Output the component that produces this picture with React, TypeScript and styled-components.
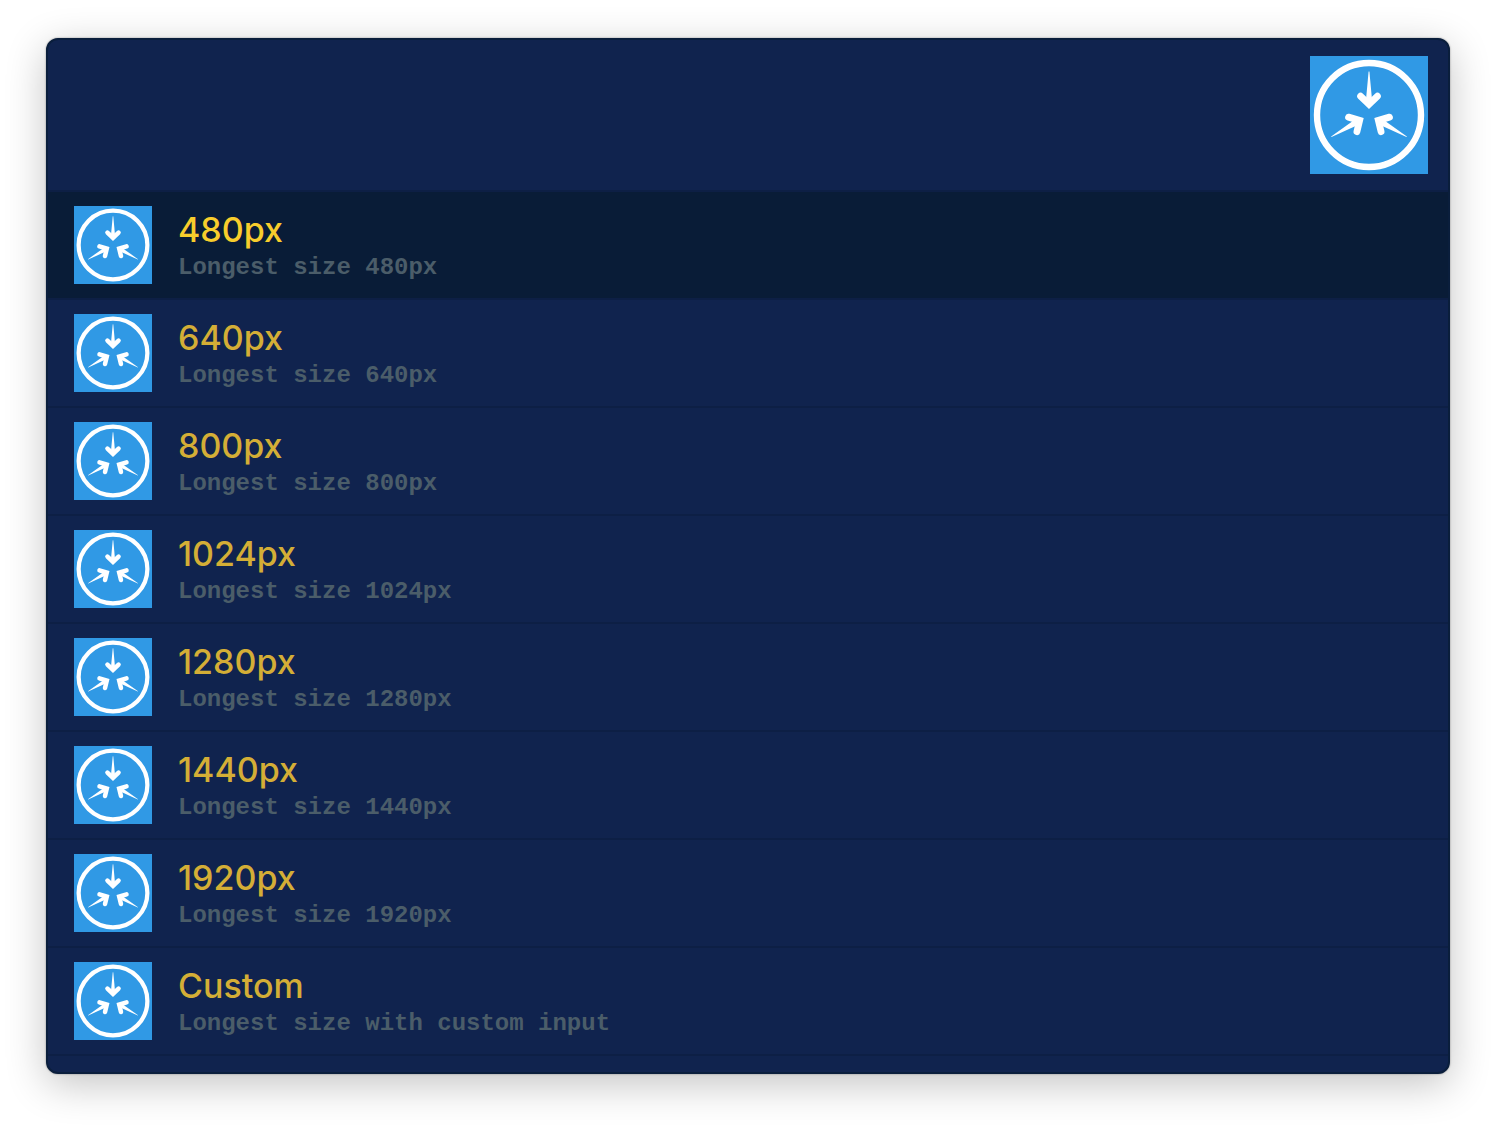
import React, { useState } from "react";
import styled, { createGlobalStyle } from "styled-components";

const GlobalStyle = createGlobalStyle`
  *, *::before, *::after { box-sizing: border-box; }
  body { margin: 0; background: #ffffff; }
`;

const Page = styled.main`
  min-height: 100vh;
  padding: 38px 46px 54px;
  font-family: Inter, "Liberation Sans", sans-serif;
`;

const Panel = styled.section`
  padding-bottom: 16px;
  overflow: hidden;
  border: 2px solid #0a1e3c;
  border-radius: 12px;
  background: #10234e;
  box-shadow: 0 0 2px rgba(0, 0, 0, 0.4), 0 10px 40px rgba(0, 0, 0, 0.24);
`;

const SearchBar = styled.header`
  display: flex;
  align-items: center;
  gap: 24px;
  padding: 16px 20px 16px 24px;
  border-bottom: 2px solid #0d1f45;
`;

const SearchInput = styled.input`
  flex: 1;
  min-width: 0;
  height: 80px;
  border: 0;
  outline: 0;
  background: transparent;
  color: #d4ae36;
  font: 500 48px Inter, "Liberation Sans", sans-serif;
`;

const Results = styled.ul`
  margin: 0;
  padding: 0;
  list-style: none;
`;

const Row = styled.button<{ $active: boolean }>`
  display: flex;
  align-items: center;
  gap: 26px;
  width: 100%;
  padding: 14px 26px;
  border: 0;
  border-bottom: 2px solid #0d1f45;
  outline: 0;
  background: ${(p) => (p.$active ? "#091c37" : "transparent")};
  color: ${(p) => (p.$active ? "#f8cd2c" : "#d4ae36")};
  font-family: inherit;
  text-align: left;
  cursor: pointer;
`;

const Labels = styled.span`
  display: flex;
  flex-direction: column;
  min-width: 0;
`;

const Title = styled.span`
  font-size: 34px;
  font-weight: 500;
  line-height: 46px;
`;

const Subtitle = styled.span`
  color: #4b5d69;
  font: 700 24px/30px "Liberation Mono", monospace;
`;

const IconSvg = styled.svg<{ $size: number }>`
  flex: none;
  display: block;
  width: ${(p) => p.$size}px;
  height: ${(p) => p.$size}px;
  background: #3099e5;
`;

function ResizeIcon({ size }: { size: number }) {
  return (
    <IconSvg $size={size} viewBox="0 0 118 118" aria-hidden="true">
      <circle cx="59" cy="59" r="52" fill="none" stroke="#fff" strokeWidth="6.4" />
      {[0, 120, 240].map((angle) => (
        <g key={angle} transform={`rotate(${angle} 59 59)`}>
          <path d="M58.6 15.5 H59.4 L62.4 48 H55.6 Z" fill="#fff" />
          <path
            d="M50.6 40.2 L59 48.2 L67.4 40.2"
            fill="none"
            stroke="#fff"
            strokeWidth="6.8"
            strokeLinecap="round"
            strokeLinejoin="miter"
          />
        </g>
      ))}
    </IconSvg>
  );
}

const sizes = [
  { title: "480px", detail: "480px" },
  { title: "640px", detail: "640px" },
  { title: "800px", detail: "800px" },
  { title: "1024px", detail: "1024px" },
  { title: "1280px", detail: "1280px" },
  { title: "1440px", detail: "1440px" },
  { title: "1920px", detail: "1920px" },
  { title: "Custom", detail: "with custom input" },
];

export default function App() {
  const [query, setQuery] = useState("");
  const [selected, setSelected] = useState(0);

  return (
    <>
      <GlobalStyle />
      <Page>
        <Panel>
          <SearchBar>
            <SearchInput
              type="text"
              aria-label="Image size"
              value={query}
              onChange={(e) => setQuery(e.target.value)}
            />
            <ResizeIcon size={118} />
          </SearchBar>
          <Results>
            {sizes.map((size, i) => (
              <li key={size.title}>
                <Row type="button" $active={i === selected} onClick={() => setSelected(i)}>
                  <ResizeIcon size={78} />
                  <Labels>
                    <Title>{size.title}</Title>
                    <Subtitle>{`Longest size ${size.detail}`}</Subtitle>
                  </Labels>
                </Row>
              </li>
            ))}
          </Results>
        </Panel>
      </Page>
    </>
  );
}
